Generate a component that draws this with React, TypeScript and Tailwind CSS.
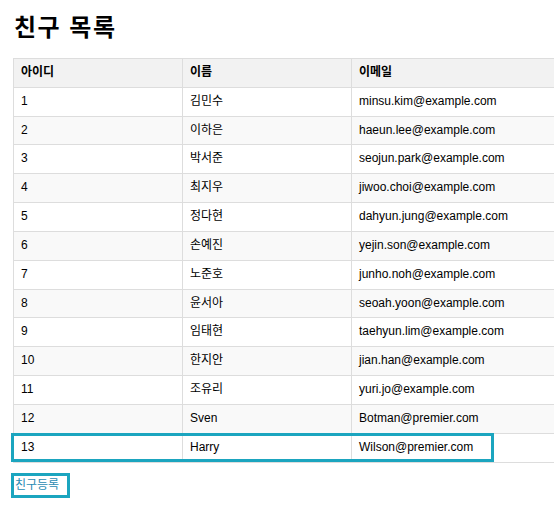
const friends = [
  { id: 1, name: '김민수', email: 'minsu.kim@example.com' },
  { id: 2, name: '이하은', email: 'haeun.lee@example.com' },
  { id: 3, name: '박서준', email: 'seojun.park@example.com' },
  { id: 4, name: '최지우', email: 'jiwoo.choi@example.com' },
  { id: 5, name: '정다현', email: 'dahyun.jung@example.com' },
  { id: 6, name: '손예진', email: 'yejin.son@example.com' },
  { id: 7, name: '노준호', email: 'junho.noh@example.com' },
  { id: 8, name: '윤서아', email: 'seoah.yoon@example.com' },
  { id: 9, name: '임태현', email: 'taehyun.lim@example.com' },
  { id: 10, name: '한지안', email: 'jian.han@example.com' },
  { id: 11, name: '조유리', email: 'yuri.jo@example.com' },
  { id: 12, name: 'Sven', email: 'Botman@premier.com' },
  { id: 13, name: 'Harry', email: 'Wilson@premier.com' },
]

export default function App() {
  return (
    <div className="w-[554px] h-[507px] overflow-hidden bg-white text-black font-['Liberation_Sans','Noto_Sans_CJK_KR',sans-serif] pl-[13px] pt-[13px]">
      <h1 className="text-[24px] leading-[30px] font-bold tracking-[1.5px] mb-[15px] pl-px">친구 목록</h1>

      <div className="relative w-[600px]">
        <table className="w-[600px] table-fixed border-collapse text-[12px] leading-[13.83px]">
          <colgroup>
            <col className="w-[169px]" />
            <col className="w-[169px]" />
            <col />
          </colgroup>
          <thead>
            <tr className="bg-[#f2f2f2]">
              <th className="border border-[#ddd] p-[7px] text-left font-bold">아이디</th>
              <th className="border border-[#ddd] p-[7px] text-left font-bold">이름</th>
              <th className="border border-[#ddd] p-[7px] text-left font-bold">이메일</th>
            </tr>
          </thead>
          <tbody>
            {friends.map((f, i) => (
              <tr key={f.id} className={i % 2 === 1 ? 'bg-[#f9f9f9]' : 'bg-white'}>
                <td className="border border-[#ddd] p-[7px]">{f.id}</td>
                <td className="border border-[#ddd] p-[7px]">{f.name}</td>
                <td className="border border-[#ddd] p-[7px]">{f.email}</td>
              </tr>
            ))}
          </tbody>
        </table>
        {/* highlight on the newest row */}
        <div className="absolute left-[-2px] top-[375px] w-[483px] h-[29px] border-[3px] border-[#1ba5bf] pointer-events-none" />
      </div>

      <a href="#" className="inline-block mt-[10px] ml-[-2px] border-[3px] border-[#1ba5bf] pl-px pr-[8px] text-[12px] leading-[19px] text-[#2a8bb3] no-underline">
        친구등록
      </a>
    </div>
  )
}
